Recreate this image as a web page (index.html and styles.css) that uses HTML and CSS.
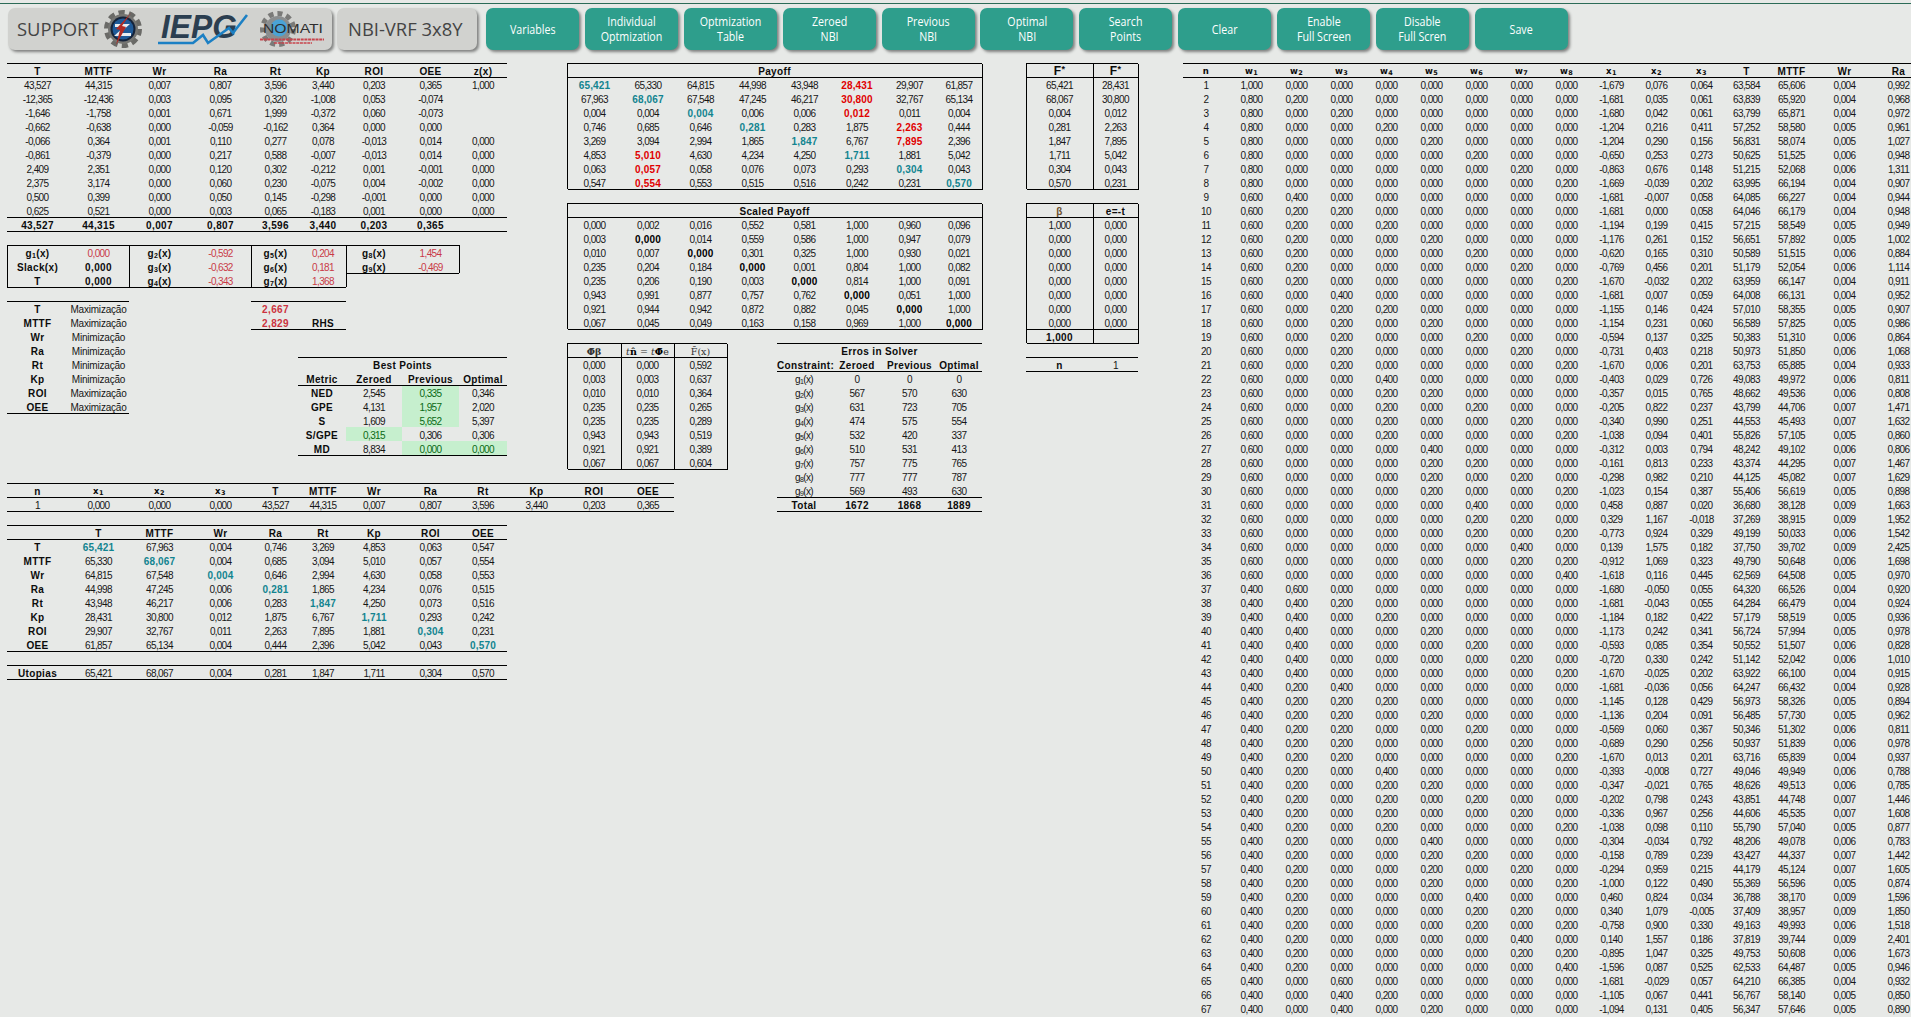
FILE: index.html
```html
<!DOCTYPE html>
<html lang="pt">
<head>
<meta charset="utf-8">
<title>NBI-VRF 3x8Y</title>
<link rel="stylesheet" href="styles.css">
</head>
<body>
<div class="topline"></div>
<header class="toolbar">
  <div class="plate logos">
    <span class="plate-text">SUPPORT</span>
    <svg class="logo-strip" viewBox="97 8 235 42" width="235" height="42" aria-label="logos">
      <circle cx="123" cy="29" r="16.5" fill="none" stroke="#6a6a67" stroke-width="5" stroke-dasharray="6.2 4.2"/>
      <circle cx="123" cy="29" r="15" fill="#757572"/>
      <circle cx="123" cy="29" r="12.5" fill="#15233a"/>
      <circle cx="123" cy="29" r="10.5" fill="#1f5a98"/>
      <path d="M115 24h15l-10 9h11v3h-17l10-9h-9z" fill="#e8edf2"/>
      <path d="M131 13l-9 13 4 1-10 18 4-15-4-1z" fill="#b02a24"/>
      <text class="iepg" x="161" y="38" textLength="76" lengthAdjust="spacingAndGlyphs">IEPG</text>
      <path d="M158 43h35l10-8 5 8 21-15 4 5 14-18" fill="none" stroke="#1c80c4" stroke-width="2.6"/>
      <circle cx="278" cy="29" r="15.5" fill="none" stroke="#7a7a78" stroke-width="5" stroke-dasharray="5 4"/>
      <circle cx="278" cy="29" r="13" fill="#8a8d8e"/>
      <circle cx="279" cy="28" r="8.5" fill="#4aa3d6"/>
      <text class="nomati" x="263" y="33" textLength="60" lengthAdjust="spacingAndGlyphs">NOMATI</text>
      <path d="M260 39.5h64" stroke="#c8444c" stroke-width="2" stroke-dasharray="3 .7" fill="none"/>
      <path d="M274 43h38" stroke="#c8444c" stroke-width="1.6" stroke-dasharray="3 .7" fill="none"/>
    </svg>
  </div>
  <div class="plate title"><span class="plate-text">NBI-VRF 3x8Y</span></div>
  <nav class="actions">
    <a class="btn"><span>Variables</span></a>
    <a class="btn"><span>Individual<br>Optmization</span></a>
    <a class="btn"><span>Optmization<br>Table</span></a>
    <a class="btn"><span>Zeroed<br>NBI</span></a>
    <a class="btn"><span>Previous<br>NBI</span></a>
    <a class="btn"><span>Optimal<br>NBI</span></a>
    <a class="btn"><span>Search<br>Points</span></a>
    <a class="btn"><span>Clear</span></a>
    <a class="btn"><span>Enable<br>Full Screen</span></a>
    <a class="btn"><span>Disable<br>Full Scren</span></a>
    <a class="btn"><span>Save</span></a>
  </nav>
</header>

<main class="sheet">

<table class="t-main">
<colgroup><col class="w61"><col class="w61"><col class="w61"><col class="w61"><col class="w49"><col class="w46"><col class="w56"><col class="w57"><col class="w48"></colgroup>
<tr class="lt"><th>T<th>MTTF<th>Wr<th>Ra<th>Rt<th>Kp<th>ROI<th>OEE<th>z(x)
<tr class="lt"><td>43,527<td>44,315<td>0,007<td>0,807<td>3,596<td>3,440<td>0,203<td>0,365<td>1,000
<tr><td>-12,365<td>-12,436<td>0,003<td>0,095<td>0,320<td>-1,008<td>0,053<td>-0,074<td>
<tr><td>-1,646<td>-1,758<td>0,001<td>0,671<td>1,999<td>-0,372<td>0,060<td>-0,073<td>
<tr class="u"><td>-0,662<td>-0,638<td>0,000<td>-0,059<td>-0,162<td>0,364<td>0,000<td>0,000<td>
<tr><td>-0,066<td>0,364<td>0,001<td>0,110<td>0,277<td>0,078<td>-0,013<td>0,014<td>0,000
<tr><td>-0,861<td>-0,379<td>0,000<td>0,217<td>0,588<td>-0,007<td>-0,013<td>0,014<td>0,000
<tr><td>2,409<td>2,351<td>0,000<td>0,120<td>0,302<td>-0,212<td>0,001<td>-0,001<td>0,000
<tr><td>2,375<td>3,174<td>0,000<td>0,060<td>0,230<td>-0,075<td>0,004<td>-0,002<td>0,000
<tr><td>0,500<td>0,399<td>0,000<td>0,050<td>0,145<td>-0,298<td>-0,001<td>0,000<td>0,000
<tr><td>0,625<td>0,521<td>0,000<td>0,003<td>0,065<td>-0,183<td>0,001<td>0,000<td>0,000
<tr class="lt lb"><th>43,527<th>44,315<th>0,007<th>0,807<th>3,596<th>3,440<th>0,203<th>0,365<td>
</table>

<table class="t-gx">
<colgroup><col class="w61"><col class="w61"><col class="w61"><col class="w61"><col class="w49"><col class="w46"><col class="w56"><col class="w57"></colgroup>
<tr class="u lt"><th class="bl">g<sub>1</sub>(x)<td class="rv">0,000<th class="bl">g<sub>2</sub>(x)<td class="rv">-0,592<th class="bl">g<sub>5</sub>(x)<td class="rv">0,204<th class="bl">g<sub>8</sub>(x)<td class="rv br">1,454
<tr class="u"><th class="bl">Slack(x)<th>0,000<th class="bl">g<sub>3</sub>(x)<td class="rv">-0,632<th class="bl">g<sub>6</sub>(x)<td class="rv">0,181<th class="bl bb">g<sub>9</sub>(x)<td class="rv br bb">-0,469
<tr class="u"><th class="bl bb">T<th class="bb">0,000<th class="bl bb">g<sub>4</sub>(x)<td class="rv bb">-0,343<th class="bl bb">g<sub>7</sub>(x)<td class="rv bb br">1,368<td><td>
</table>

<table class="t-obj">
<colgroup><col class="w61"><col class="w61"></colgroup>
<tr class="lt"><th>T<td>Maximização
<tr><th>MTTF<td>Maximização
<tr><th>Wr<td>Minimização
<tr><th>Ra<td>Minimização
<tr><th>Rt<td>Minimização
<tr class="u"><th>Kp<td>Minimização
<tr class="u"><th>ROI<td>Maximização
<tr class="u lb"><th>OEE<td>Maximização
</table>

<table class="t-rhs">
<colgroup><col class="w49"><col class="w46"></colgroup>
<tr class="lt"><th class="rb">2,667<td>
<tr class="lb"><th class="rb">2,829<th>RHS
</table>

<table class="t-best">
<colgroup><col class="w48"><col class="w56"><col class="w57"><col class="w48"></colgroup>
<tr class="lt"><th colspan="4">Best Points
<tr class="u"><th>Metric<th>Zeroed<th>Previous<th>Optimal
<tr class="u lt"><th>NED<td>2,545<td class="good">0,335<td>0,346
<tr class="u"><th>GPE<td>4,131<td class="good">1,957<td>2,020
<tr class="u"><th>S<td>1,609<td class="good">5,652<td>5,397
<tr class="u"><th>S/GPE<td class="good">0,315<td>0,306<td>0,306
<tr class="u lb"><th>MD<td>8,834<td class="good">0,000<td class="good">0,000
</table>

<table class="t-sel">
<colgroup><col class="w61"><col class="w61"><col class="w61"><col class="w61"><col class="w49"><col class="w46"><col class="w56"><col class="w57"><col class="w48"><col class="w59"><col class="w56"><col class="w52"></colgroup>
<tr class="u lt"><th>n<th class="mini">x<sub>1</sub><th class="mini">x<sub>2</sub><th class="mini">x<sub>3</sub><th>T<th>MTTF<th>Wr<th>Ra<th>Rt<th>Kp<th>ROI<th>OEE
<tr class="lt lb"><td>1<td>0,000<td>0,000<td>0,000<td>43,527<td>44,315<td>0,007<td>0,807<td>3,596<td>3,440<td>0,203<td>0,365
</table>

<table class="t-cross">
<colgroup><col class="w61"><col class="w61"><col class="w61"><col class="w61"><col class="w49"><col class="w46"><col class="w56"><col class="w57"><col class="w48"></colgroup>
<tr class="lt"><th><th>T<th>MTTF<th>Wr<th>Ra<th>Rt<th>Kp<th>ROI<th>OEE
<tr class="lt"><th>T<td><b class="tl">65,421</b><td>67,963<td>0,004<td>0,746<td>3,269<td>4,853<td>0,063<td>0,547
<tr><th>MTTF<td>65,330<td><b class="tl">68,067</b><td>0,004<td>0,685<td>3,094<td>5,010<td>0,057<td>0,554
<tr><th>Wr<td>64,815<td>67,548<td><b class="tl">0,004</b><td>0,646<td>2,994<td>4,630<td>0,058<td>0,553
<tr><th>Ra<td>44,998<td>47,245<td>0,006<td><b class="tl">0,281</b><td>1,865<td>4,234<td>0,076<td>0,515
<tr><th>Rt<td>43,948<td>46,217<td>0,006<td>0,283<td><b class="tl">1,847</b><td>4,250<td>0,073<td>0,516
<tr><th>Kp<td>28,431<td>30,800<td>0,012<td>1,875<td>6,767<td><b class="tl">1,711</b><td>0,293<td>0,242
<tr><th>ROI<td>29,907<td>32,767<td>0,011<td>2,263<td>7,895<td>1,881<td><b class="tl">0,304</b><td>0,231
<tr class="lb"><th>OEE<td>61,857<td>65,134<td>0,004<td>0,444<td>2,396<td>5,042<td>0,043<td><b class="tl">0,570</b>
</table>

<table class="t-utop">
<colgroup><col class="w61"><col class="w61"><col class="w61"><col class="w61"><col class="w49"><col class="w46"><col class="w56"><col class="w57"><col class="w48"></colgroup>
<tr class="lt lb"><th>Utopias<td>65,421<td>68,067<td>0,004<td>0,281<td>1,847<td>1,711<td>0,304<td>0,570
</table>

<table class="t-pay box">
<colgroup><col class="w55"><col class="w52"><col class="w53"><col class="w51"><col class="w53"><col class="w52"><col class="w53"><col class="w46"></colgroup>
<tr><th colspan="8">Payoff
<tr class="lt"><td><b class="tl">65,421</b><td>65,330<td>64,815<td>44,998<td>43,948<td><b class="rd">28,431</b><td>29,907<td>61,857
<tr><td>67,963<td><b class="tl">68,067</b><td>67,548<td>47,245<td>46,217<td><b class="rd">30,800</b><td>32,767<td>65,134
<tr><td>0,004<td>0,004<td><b class="tl">0,004</b><td>0,006<td>0,006<td><b class="rd">0,012</b><td>0,011<td>0,004
<tr class="u"><td>0,746<td>0,685<td>0,646<td><b class="tl">0,281</b><td>0,283<td>1,875<td><b class="rd">2,263</b><td>0,444
<tr><td>3,269<td>3,094<td>2,994<td>1,865<td><b class="tl">1,847</b><td>6,767<td><b class="rd">7,895</b><td>2,396
<tr><td>4,853<td><b class="rd">5,010</b><td>4,630<td>4,234<td>4,250<td><b class="tl">1,711</b><td>1,881<td>5,042
<tr><td>0,063<td><b class="rd">0,057</b><td>0,058<td>0,076<td>0,073<td>0,293<td><b class="tl">0,304</b><td>0,043
<tr><td>0,547<td><b class="rd">0,554</b><td>0,553<td>0,515<td>0,516<td>0,242<td>0,231<td><b class="tl">0,570</b>
</table>

<table class="t-scaled box">
<colgroup><col class="w55"><col class="w52"><col class="w53"><col class="w51"><col class="w53"><col class="w52"><col class="w53"><col class="w46"></colgroup>
<tr><th colspan="8">Scaled Payoff
<tr class="lt"><td>0,000<td>0,002<td>0,016<td>0,552<td>0,581<td>1,000<td>0,960<td>0,096
<tr><td>0,003<td><b>0,000</b><td>0,014<td>0,559<td>0,586<td>1,000<td>0,947<td>0,079
<tr class="u"><td>0,010<td>0,007<td><b>0,000</b><td>0,301<td>0,325<td>1,000<td>0,930<td>0,021
<tr class="u"><td>0,235<td>0,204<td>0,184<td><b>0,000</b><td>0,001<td>0,804<td>1,000<td>0,082
<tr class="u"><td>0,235<td>0,206<td>0,190<td>0,003<td><b>0,000</b><td>0,814<td>1,000<td>0,091
<tr><td>0,943<td>0,991<td>0,877<td>0,757<td>0,762<td><b>0,000</b><td>0,051<td>1,000
<tr><td>0,921<td>0,944<td>0,942<td>0,872<td>0,882<td>0,045<td><b>0,000</b><td>1,000
<tr><td>0,067<td>0,045<td>0,049<td>0,163<td>0,158<td>0,969<td>1,000<td><b>0,000</b>
</table>

<table class="t-phi box">
<colgroup><col class="w54"><col class="w53"><col class="w53"></colgroup>
<tr><th class="math">Φ̄β<td class="bl math"><i>t</i><b>n̂</b> = <i>t</i><b>Φ̄</b>e<td class="bl math">F̄(x)
<tr class="lt"><td>0,000<td class="bl">0,000<td class="bl">0,592
<tr class="u"><td>0,003<td class="bl">0,003<td class="bl">0,637
<tr class="u"><td>0,010<td class="bl">0,010<td class="bl">0,364
<tr class="u"><td>0,235<td class="bl">0,235<td class="bl">0,265
<tr class="u"><td>0,235<td class="bl">0,235<td class="bl">0,289
<tr class="u"><td>0,943<td class="bl">0,943<td class="bl">0,519
<tr class="u"><td>0,921<td class="bl">0,921<td class="bl">0,389
<tr class="u"><td>0,067<td class="bl">0,067<td class="bl">0,604
</table>

<table class="t-err">
<colgroup><col class="w54"><col class="w52"><col class="w53"><col class="w46"></colgroup>
<tr class="lt"><th colspan="4">Erros in Solver
<tr><th>Constraint:<th>Zeroed<th>Previous<th>Optimal
<tr class="u lt"><td>g<sub>1</sub>(x)<td>0<td>0<td>0
<tr class="u"><td>g<sub>2</sub>(x)<td>567<td>570<td>630
<tr class="u"><td>g<sub>3</sub>(x)<td>631<td>723<td>705
<tr class="u"><td>g<sub>4</sub>(x)<td>474<td>575<td>554
<tr class="u"><td>g<sub>5</sub>(x)<td>532<td>420<td>337
<tr class="u"><td>g<sub>6</sub>(x)<td>510<td>531<td>413
<tr class="u"><td>g<sub>7</sub>(x)<td>757<td>775<td>765
<tr class="u"><td>g<sub>8</sub>(x)<td>777<td>777<td>787
<tr class="u"><td>g<sub>9</sub>(x)<td>569<td>493<td>630
<tr class="lt lb"><th>Total<th>1672<th>1868<th>1889
</table>

<table class="t-fstar box">
<colgroup><col class="w67"><col class="w45"></colgroup>
<tr><th class="big">F<sup>*</sup><th class="bl big">F<sup>*</sup>
<tr class="lt"><td>65,421<td class="bl">28,431
<tr><td>68,067<td class="bl">30,800
<tr><td>0,004<td class="bl">0,012
<tr class="u"><td>0,281<td class="bl">2,263
<tr><td>1,847<td class="bl">7,895
<tr><td>1,711<td class="bl">5,042
<tr><td>0,304<td class="bl">0,043
<tr><td>0,570<td class="bl">0,231
</table>

<table class="t-beta box">
<colgroup><col class="w67"><col class="w45"></colgroup>
<tr><th class="beta">β<th class="bl">e=-t
<tr class="lt"><td>1,000<td class="bl">0,000
<tr><td>0,000<td class="bl">0,000
<tr class="u"><td>0,000<td class="bl">0,000
<tr class="u"><td>0,000<td class="bl">0,000
<tr class="u"><td>0,000<td class="bl">0,000
<tr><td>0,000<td class="bl">0,000
<tr><td>0,000<td class="bl">0,000
<tr><td>0,000<td class="bl">0,000
<tr class="lt"><th>1,000<td class="bl">
</table>

<table class="t-n">
<colgroup><col class="w67"><col class="w45"></colgroup>
<tr class="lt lb"><th>n<td>1
</table>

<table class="t-list">
<colgroup><col class="w46"><col class="w45"><col class="w45"><col class="w45"><col class="w45"><col class="w45"><col class="w45"><col class="w45"><col class="w45"><col class="w45"><col class="w45"><col class="w45"><col class="w45"><col class="w45"><col class="w61"><col class="w47"></colgroup>
<tr class="lt"><th class="mini">n<th class="mini">w<sub>1</sub><th class="mini">w<sub>2</sub><th class="mini">w<sub>3</sub><th class="mini">w<sub>4</sub><th class="mini">w<sub>5</sub><th class="mini">w<sub>6</sub><th class="mini">w<sub>7</sub><th class="mini">w<sub>8</sub><th class="mini">x<sub>1</sub><th class="mini">x<sub>2</sub><th class="mini">x<sub>3</sub><th>T<th>MTTF<th>Wr<th>Ra
<tr class="lt"><td>1<td>1,000<td>0,000<td>0,000<td>0,000<td>0,000<td>0,000<td>0,000<td>0,000<td>-1,679<td>0,076<td>0,064<td>63,584<td>65,606<td>0,004<td>0,992
<tr><td>2<td>0,800<td>0,200<td>0,000<td>0,000<td>0,000<td>0,000<td>0,000<td>0,000<td>-1,681<td>0,035<td>0,061<td>63,839<td>65,920<td>0,004<td>0,968
<tr><td>3<td>0,800<td>0,000<td>0,200<td>0,000<td>0,000<td>0,000<td>0,000<td>0,000<td>-1,680<td>0,042<td>0,061<td>63,799<td>65,871<td>0,004<td>0,972
<tr class="u"><td>4<td>0,800<td>0,000<td>0,000<td>0,200<td>0,000<td>0,000<td>0,000<td>0,000<td>-1,204<td>0,216<td>0,411<td>57,252<td>58,580<td>0,005<td>0,961
<tr><td>5<td>0,800<td>0,000<td>0,000<td>0,000<td>0,200<td>0,000<td>0,000<td>0,000<td>-1,204<td>0,290<td>0,156<td>56,831<td>58,074<td>0,005<td>1,027
<tr><td>6<td>0,800<td>0,000<td>0,000<td>0,000<td>0,000<td>0,200<td>0,000<td>0,000<td>-0,650<td>0,253<td>0,273<td>50,625<td>51,525<td>0,006<td>0,948
<tr><td>7<td>0,800<td>0,000<td>0,000<td>0,000<td>0,000<td>0,000<td>0,200<td>0,000<td>-0,863<td>0,676<td>0,148<td>51,215<td>52,068<td>0,006<td>1,311
<tr><td>8<td>0,800<td>0,000<td>0,000<td>0,000<td>0,000<td>0,000<td>0,000<td>0,200<td>-1,669<td>-0,039<td>0,202<td>63,995<td>66,194<td>0,004<td>0,907
<tr><td>9<td>0,600<td>0,400<td>0,000<td>0,000<td>0,000<td>0,000<td>0,000<td>0,000<td>-1,681<td>-0,007<td>0,058<td>64,085<td>66,227<td>0,004<td>0,944
<tr><td>10<td>0,600<td>0,200<td>0,200<td>0,000<td>0,000<td>0,000<td>0,000<td>0,000<td>-1,681<td>0,000<td>0,058<td>64,046<td>66,179<td>0,004<td>0,948
<tr><td>11<td>0,600<td>0,200<td>0,000<td>0,200<td>0,000<td>0,000<td>0,000<td>0,000<td>-1,194<td>0,199<td>0,415<td>57,215<td>58,549<td>0,005<td>0,949
<tr><td>12<td>0,600<td>0,200<td>0,000<td>0,000<td>0,200<td>0,000<td>0,000<td>0,000<td>-1,176<td>0,261<td>0,152<td>56,651<td>57,892<td>0,005<td>1,002
<tr class="u"><td>13<td>0,600<td>0,200<td>0,000<td>0,000<td>0,000<td>0,200<td>0,000<td>0,000<td>-0,620<td>0,165<td>0,310<td>50,589<td>51,515<td>0,006<td>0,884
<tr class="u"><td>14<td>0,600<td>0,200<td>0,000<td>0,000<td>0,000<td>0,000<td>0,200<td>0,000<td>-0,769<td>0,456<td>0,201<td>51,179<td>52,054<td>0,006<td>1,114
<tr class="u"><td>15<td>0,600<td>0,200<td>0,000<td>0,000<td>0,000<td>0,000<td>0,000<td>0,200<td>-1,670<td>-0,032<td>0,202<td>63,959<td>66,147<td>0,004<td>0,911
<tr><td>16<td>0,600<td>0,000<td>0,400<td>0,000<td>0,000<td>0,000<td>0,000<td>0,000<td>-1,681<td>0,007<td>0,059<td>64,008<td>66,131<td>0,004<td>0,952
<tr><td>17<td>0,600<td>0,000<td>0,200<td>0,200<td>0,000<td>0,000<td>0,000<td>0,000<td>-1,155<td>0,146<td>0,424<td>57,010<td>58,355<td>0,005<td>0,907
<tr><td>18<td>0,600<td>0,000<td>0,200<td>0,000<td>0,200<td>0,000<td>0,000<td>0,000<td>-1,154<td>0,231<td>0,060<td>56,589<td>57,825<td>0,005<td>0,986
<tr><td>19<td>0,600<td>0,000<td>0,200<td>0,000<td>0,000<td>0,200<td>0,000<td>0,000<td>-0,594<td>0,137<td>0,325<td>50,383<td>51,310<td>0,006<td>0,864
<tr><td>20<td>0,600<td>0,000<td>0,200<td>0,000<td>0,000<td>0,000<td>0,200<td>0,000<td>-0,731<td>0,403<td>0,218<td>50,973<td>51,850<td>0,006<td>1,068
<tr><td>21<td>0,600<td>0,000<td>0,200<td>0,000<td>0,000<td>0,000<td>0,000<td>0,200<td>-1,670<td>0,006<td>0,201<td>63,753<td>65,885<td>0,004<td>0,933
<tr class="u"><td>22<td>0,600<td>0,000<td>0,000<td>0,400<td>0,000<td>0,000<td>0,000<td>0,000<td>-0,403<td>0,029<td>0,726<td>49,083<td>49,972<td>0,006<td>0,811
<tr class="u"><td>23<td>0,600<td>0,000<td>0,000<td>0,200<td>0,200<td>0,000<td>0,000<td>0,000<td>-0,357<td>0,015<td>0,765<td>48,662<td>49,536<td>0,006<td>0,808
<tr class="u"><td>24<td>0,600<td>0,000<td>0,000<td>0,200<td>0,000<td>0,200<td>0,000<td>0,000<td>-0,205<td>0,822<td>0,237<td>43,799<td>44,706<td>0,007<td>1,471
<tr class="u"><td>25<td>0,600<td>0,000<td>0,000<td>0,200<td>0,000<td>0,000<td>0,200<td>0,000<td>-0,340<td>0,990<td>0,251<td>44,553<td>45,493<td>0,007<td>1,632
<tr class="u"><td>26<td>0,600<td>0,000<td>0,000<td>0,200<td>0,000<td>0,000<td>0,000<td>0,200<td>-1,038<td>0,094<td>0,401<td>55,826<td>57,105<td>0,005<td>0,860
<tr class="u"><td>27<td>0,600<td>0,000<td>0,000<td>0,000<td>0,400<td>0,000<td>0,000<td>0,000<td>-0,312<td>0,003<td>0,794<td>48,242<td>49,102<td>0,006<td>0,806
<tr class="u"><td>28<td>0,600<td>0,000<td>0,000<td>0,000<td>0,200<td>0,200<td>0,000<td>0,000<td>-0,161<td>0,813<td>0,233<td>43,374<td>44,295<td>0,007<td>1,467
<tr class="u"><td>29<td>0,600<td>0,000<td>0,000<td>0,000<td>0,200<td>0,000<td>0,200<td>0,000<td>-0,298<td>0,982<td>0,210<td>44,125<td>45,082<td>0,007<td>1,629
<tr class="u"><td>30<td>0,600<td>0,000<td>0,000<td>0,000<td>0,200<td>0,000<td>0,000<td>0,200<td>-1,023<td>0,154<td>0,387<td>55,406<td>56,619<td>0,005<td>0,898
<tr><td>31<td>0,600<td>0,000<td>0,000<td>0,000<td>0,000<td>0,400<td>0,000<td>0,000<td>0,458<td>0,887<td>0,020<td>36,680<td>38,128<td>0,009<td>1,663
<tr><td>32<td>0,600<td>0,000<td>0,000<td>0,000<td>0,000<td>0,200<td>0,200<td>0,000<td>0,329<td>1,167<td>-0,018<td>37,269<td>38,915<td>0,009<td>1,952
<tr><td>33<td>0,600<td>0,000<td>0,000<td>0,000<td>0,000<td>0,200<td>0,000<td>0,200<td>-0,773<td>0,924<td>0,329<td>49,199<td>50,033<td>0,006<td>1,542
<tr><td>34<td>0,600<td>0,000<td>0,000<td>0,000<td>0,000<td>0,000<td>0,400<td>0,000<td>0,139<td>1,575<td>0,182<td>37,750<td>39,702<td>0,009<td>2,425
<tr><td>35<td>0,600<td>0,000<td>0,000<td>0,000<td>0,000<td>0,000<td>0,200<td>0,200<td>-0,912<td>1,069<td>0,323<td>49,790<td>50,648<td>0,006<td>1,698
<tr><td>36<td>0,600<td>0,000<td>0,000<td>0,000<td>0,000<td>0,000<td>0,000<td>0,400<td>-1,618<td>0,116<td>0,445<td>62,569<td>64,508<td>0,005<td>0,970
<tr><td>37<td>0,400<td>0,600<td>0,000<td>0,000<td>0,000<td>0,000<td>0,000<td>0,000<td>-1,680<td>-0,050<td>0,055<td>64,320<td>66,526<td>0,004<td>0,920
<tr><td>38<td>0,400<td>0,400<td>0,200<td>0,000<td>0,000<td>0,000<td>0,000<td>0,000<td>-1,681<td>-0,043<td>0,055<td>64,284<td>66,479<td>0,004<td>0,924
<tr><td>39<td>0,400<td>0,400<td>0,000<td>0,200<td>0,000<td>0,000<td>0,000<td>0,000<td>-1,184<td>0,182<td>0,422<td>57,179<td>58,519<td>0,005<td>0,936
<tr><td>40<td>0,400<td>0,400<td>0,000<td>0,000<td>0,200<td>0,000<td>0,000<td>0,000<td>-1,173<td>0,242<td>0,341<td>56,724<td>57,994<td>0,005<td>0,978
<tr><td>41<td>0,400<td>0,400<td>0,000<td>0,000<td>0,000<td>0,200<td>0,000<td>0,000<td>-0,593<td>0,085<td>0,354<td>50,552<td>51,507<td>0,006<td>0,828
<tr><td>42<td>0,400<td>0,400<td>0,000<td>0,000<td>0,000<td>0,000<td>0,200<td>0,000<td>-0,720<td>0,330<td>0,242<td>51,142<td>52,042<td>0,006<td>1,010
<tr><td>43<td>0,400<td>0,400<td>0,000<td>0,000<td>0,000<td>0,000<td>0,000<td>0,200<td>-1,670<td>-0,025<td>0,202<td>63,922<td>66,100<td>0,004<td>0,915
<tr><td>44<td>0,400<td>0,200<td>0,400<td>0,000<td>0,000<td>0,000<td>0,000<td>0,000<td>-1,681<td>-0,036<td>0,056<td>64,247<td>66,432<td>0,004<td>0,928
<tr><td>45<td>0,400<td>0,200<td>0,200<td>0,200<td>0,000<td>0,000<td>0,000<td>0,000<td>-1,145<td>0,128<td>0,429<td>56,973<td>58,326<td>0,005<td>0,894
<tr><td>46<td>0,400<td>0,200<td>0,200<td>0,000<td>0,200<td>0,000<td>0,000<td>0,000<td>-1,136<td>0,204<td>0,091<td>56,485<td>57,730<td>0,005<td>0,962
<tr><td>47<td>0,400<td>0,200<td>0,200<td>0,000<td>0,000<td>0,200<td>0,000<td>0,000<td>-0,569<td>0,060<td>0,367<td>50,346<td>51,302<td>0,006<td>0,811
<tr><td>48<td>0,400<td>0,200<td>0,200<td>0,000<td>0,000<td>0,000<td>0,200<td>0,000<td>-0,689<td>0,290<td>0,256<td>50,937<td>51,839<td>0,006<td>0,978
<tr><td>49<td>0,400<td>0,200<td>0,200<td>0,000<td>0,000<td>0,000<td>0,000<td>0,200<td>-1,670<td>0,013<td>0,201<td>63,716<td>65,839<td>0,004<td>0,937
<tr><td>50<td>0,400<td>0,200<td>0,000<td>0,400<td>0,000<td>0,000<td>0,000<td>0,000<td>-0,393<td>-0,008<td>0,727<td>49,046<td>49,949<td>0,006<td>0,788
<tr><td>51<td>0,400<td>0,200<td>0,000<td>0,200<td>0,200<td>0,000<td>0,000<td>0,000<td>-0,347<td>-0,021<td>0,765<td>48,626<td>49,513<td>0,006<td>0,785
<tr><td>52<td>0,400<td>0,200<td>0,000<td>0,200<td>0,000<td>0,200<td>0,000<td>0,000<td>-0,202<td>0,798<td>0,243<td>43,851<td>44,748<td>0,007<td>1,446
<tr><td>53<td>0,400<td>0,200<td>0,000<td>0,200<td>0,000<td>0,000<td>0,200<td>0,000<td>-0,336<td>0,967<td>0,256<td>44,606<td>45,535<td>0,007<td>1,608
<tr><td>54<td>0,400<td>0,200<td>0,000<td>0,200<td>0,000<td>0,000<td>0,000<td>0,200<td>-1,038<td>0,098<td>0,110<td>55,790<td>57,040<td>0,005<td>0,877
<tr><td>55<td>0,400<td>0,200<td>0,000<td>0,000<td>0,400<td>0,000<td>0,000<td>0,000<td>-0,304<td>-0,034<td>0,792<td>48,206<td>49,078<td>0,006<td>0,783
<tr><td>56<td>0,400<td>0,200<td>0,000<td>0,000<td>0,200<td>0,200<td>0,000<td>0,000<td>-0,158<td>0,789<td>0,239<td>43,427<td>44,337<td>0,007<td>1,442
<tr><td>57<td>0,400<td>0,200<td>0,000<td>0,000<td>0,200<td>0,000<td>0,200<td>0,000<td>-0,294<td>0,959<td>0,215<td>44,179<td>45,124<td>0,007<td>1,605
<tr><td>58<td>0,400<td>0,200<td>0,000<td>0,000<td>0,200<td>0,000<td>0,000<td>0,200<td>-1,000<td>0,122<td>0,490<td>55,369<td>56,596<td>0,005<td>0,874
<tr><td>59<td>0,400<td>0,200<td>0,000<td>0,000<td>0,000<td>0,400<td>0,000<td>0,000<td>0,460<td>0,824<td>0,034<td>36,788<td>38,170<td>0,009<td>1,596
<tr><td>60<td>0,400<td>0,200<td>0,000<td>0,000<td>0,000<td>0,200<td>0,200<td>0,000<td>0,340<td>1,079<td>-0,005<td>37,409<td>38,957<td>0,009<td>1,850
<tr><td>61<td>0,400<td>0,200<td>0,000<td>0,000<td>0,000<td>0,200<td>0,000<td>0,200<td>-0,758<td>0,900<td>0,330<td>49,163<td>49,993<td>0,006<td>1,518
<tr><td>62<td>0,400<td>0,200<td>0,000<td>0,000<td>0,000<td>0,000<td>0,400<td>0,000<td>0,140<td>1,557<td>0,186<td>37,819<td>39,744<td>0,009<td>2,401
<tr><td>63<td>0,400<td>0,200<td>0,000<td>0,000<td>0,000<td>0,000<td>0,200<td>0,200<td>-0,895<td>1,047<td>0,325<td>49,753<td>50,608<td>0,006<td>1,673
<tr><td>64<td>0,400<td>0,200<td>0,000<td>0,000<td>0,000<td>0,000<td>0,000<td>0,400<td>-1,596<td>0,087<td>0,525<td>62,533<td>64,487<td>0,005<td>0,946
<tr><td>65<td>0,400<td>0,000<td>0,600<td>0,000<td>0,000<td>0,000<td>0,000<td>0,000<td>-1,681<td>-0,029<td>0,057<td>64,210<td>66,385<td>0,004<td>0,932
<tr><td>66<td>0,400<td>0,000<td>0,400<td>0,200<td>0,000<td>0,000<td>0,000<td>0,000<td>-1,105<td>0,067<td>0,441<td>56,767<td>58,140<td>0,005<td>0,850
<tr><td>67<td>0,400<td>0,000<td>0,400<td>0,000<td>0,200<td>0,000<td>0,000<td>0,000<td>-1,094<td>0,131<td>0,405<td>56,347<td>57,646<td>0,005<td>0,890
</table>

</main>
</body>
</html>
```

FILE: styles.css
```css
html, body { margin: 0; height: 100%; overflow: hidden; }
body {
  width: 1911px;
  height: 1017px;
  background: #e7e9e7;
  color: #161616;
  font-family: "Liberation Sans", Arial, sans-serif;
  font-size: 10px;
}

.topline { height: 3px; border-bottom: 1px solid #2c6b57; margin-bottom: 4px; }

.toolbar { display: flex; height: 42px; padding-left: 8px; gap: 5px; }
.plate {
  display: flex;
  align-items: center;
  background: #d1d2cf;
  border-radius: 7px;
  box-shadow: 2px 2px 3px rgba(0, 0, 0, .45);
  font-family: "Open Sans", "Noto Sans", sans-serif;
  color: #444;
  font-size: 19px;
}
.plate-text { display: inline-block; transform: scaleX(.97); transform-origin: left center; white-space: nowrap; }
.logos { width: 324px; padding-left: 9px; box-sizing: border-box; position: relative; }
.logo-strip { position: absolute; left: 89px; top: 0; }
.iepg { font: italic bold 33px "Liberation Sans", sans-serif; fill: #2b3e50; }
.nomati { font: 12.5px "Liberation Sans", sans-serif; fill: #2e2e2e; }
.title { width: 140px; padding-left: 11px; box-sizing: border-box; }

.actions { display: flex; gap: 5.9px; margin-left: 4px; }
.btn {
  width: 93px;
  height: 42px;
  display: flex;
  align-items: center;
  justify-content: center;
  text-align: center;
  background: #2e9e8c;
  border-radius: 7px;
  box-shadow: 2px 2px 3px rgba(0, 0, 0, .45);
  color: #fff;
  font-family: "Open Sans", "Noto Sans", sans-serif;
  font-size: 13px;
  line-height: 15px;
}
.btn span { display: inline-block; transform: scaleX(.82); white-space: nowrap; }

.sheet {
  display: grid;
  grid-template-columns: 122px 122px 47px 269px 210px 249px 157px 1fr;
  grid-auto-rows: 14px;
  margin: 13px 0 0 7px;
  width: 1904px;
  overflow: hidden;
  height: 954px;
}

table {
  border-collapse: separate;
  border-spacing: 0;
  table-layout: fixed;
  align-self: start;
  justify-self: start;
}
tr { height: 14px; }
th, td {
  height: 14px;
  padding: 3px 0 0;
  box-sizing: border-box;
  text-align: center;
  white-space: nowrap;
  line-height: 11px;
  letter-spacing: -.62px;
  font-weight: 400;
  box-shadow:
    inset 0 var(--t, 0) #000,
    0 var(--b, 0) #000,
    inset var(--l, 0) 0 #000,
    var(--r, 0) 0 #000;
}
th { font-weight: 700; letter-spacing: .35px; color: #0c0c0c; }
td b { font-weight: 700; letter-spacing: .15px; color: #000; }
tr.u th, tr.u td { padding-top: 2px; }
.t-obj td { letter-spacing: -.2px; }

tr.lt { --t: 1px; }
tr.lb { --b: 1px; }
.bl { --l: 1px; }
.bb { --b: 1px; }
.br { --r: 1px; }
.box { box-shadow: inset 1px 1px #000, 1px 1px #000; }

sub { font-size: 7px; line-height: 0; vertical-align: -1px; }
sup { font-size: 9px; line-height: 0; vertical-align: 3px; }
.mini { font-family: "DejaVu Sans", sans-serif; font-size: 8.5px; letter-spacing: .4px; }
.mini sub { font-size: 6.5px; }
.big { font-size: 12px; }
.math { font-family: "DejaVu Serif", "Liberation Serif", serif; font-size: 9.5px; letter-spacing: 0; color: #333; font-weight: 400; }
th.math { font-weight: 700; }
.beta { color: #6d5230; }

.tl { color: #128490 !important; }
.rd { color: #e00000 !important; }
.rv { color: #c93a48; }
.rb { color: #cc3340; }
.good { background: #c6efce; color: #0a6a14; }

.w45 { width: 45px; } .w46 { width: 46px; } .w47 { width: 47px; } .w48 { width: 48px; }
.w49 { width: 49px; } .w51 { width: 51px; } .w52 { width: 52px; } .w53 { width: 53px; }
.w54 { width: 54px; } .w55 { width: 55px; } .w56 { width: 56px; } .w57 { width: 57px; }
.w59 { width: 59px; } .w61 { width: 61px; } .w67 { width: 67px; }

.t-main   { grid-column: 1; grid-row: 1;  width: 500px; }
.t-gx     { grid-column: 1; grid-row: 14; width: 452px; }
.t-obj    { grid-column: 1; grid-row: 18; width: 122px; }
.t-rhs    { grid-column: 3; grid-row: 18; width: 95px; }
.t-best   { grid-column: 4; grid-row: 22; width: 209px; }
.t-sel    { grid-column: 1; grid-row: 31; width: 667px; }
.t-cross  { grid-column: 1; grid-row: 34; width: 500px; }
.t-utop   { grid-column: 1; grid-row: 44; width: 500px; }
.t-pay    { grid-column: 5; grid-row: 1;  width: 415px; }
.t-scaled { grid-column: 5; grid-row: 11; width: 415px; }
.t-phi    { grid-column: 5; grid-row: 21; width: 160px; }
.t-err    { grid-column: 6; grid-row: 21; width: 205px; }
.t-fstar  { grid-column: 7; grid-row: 1;  width: 112px; }
.t-beta   { grid-column: 7; grid-row: 11; width: 112px; }
.t-n      { grid-column: 7; grid-row: 22; width: 112px; }
.t-list   { grid-column: 8; grid-row: 1;  width: 739px; }
```
